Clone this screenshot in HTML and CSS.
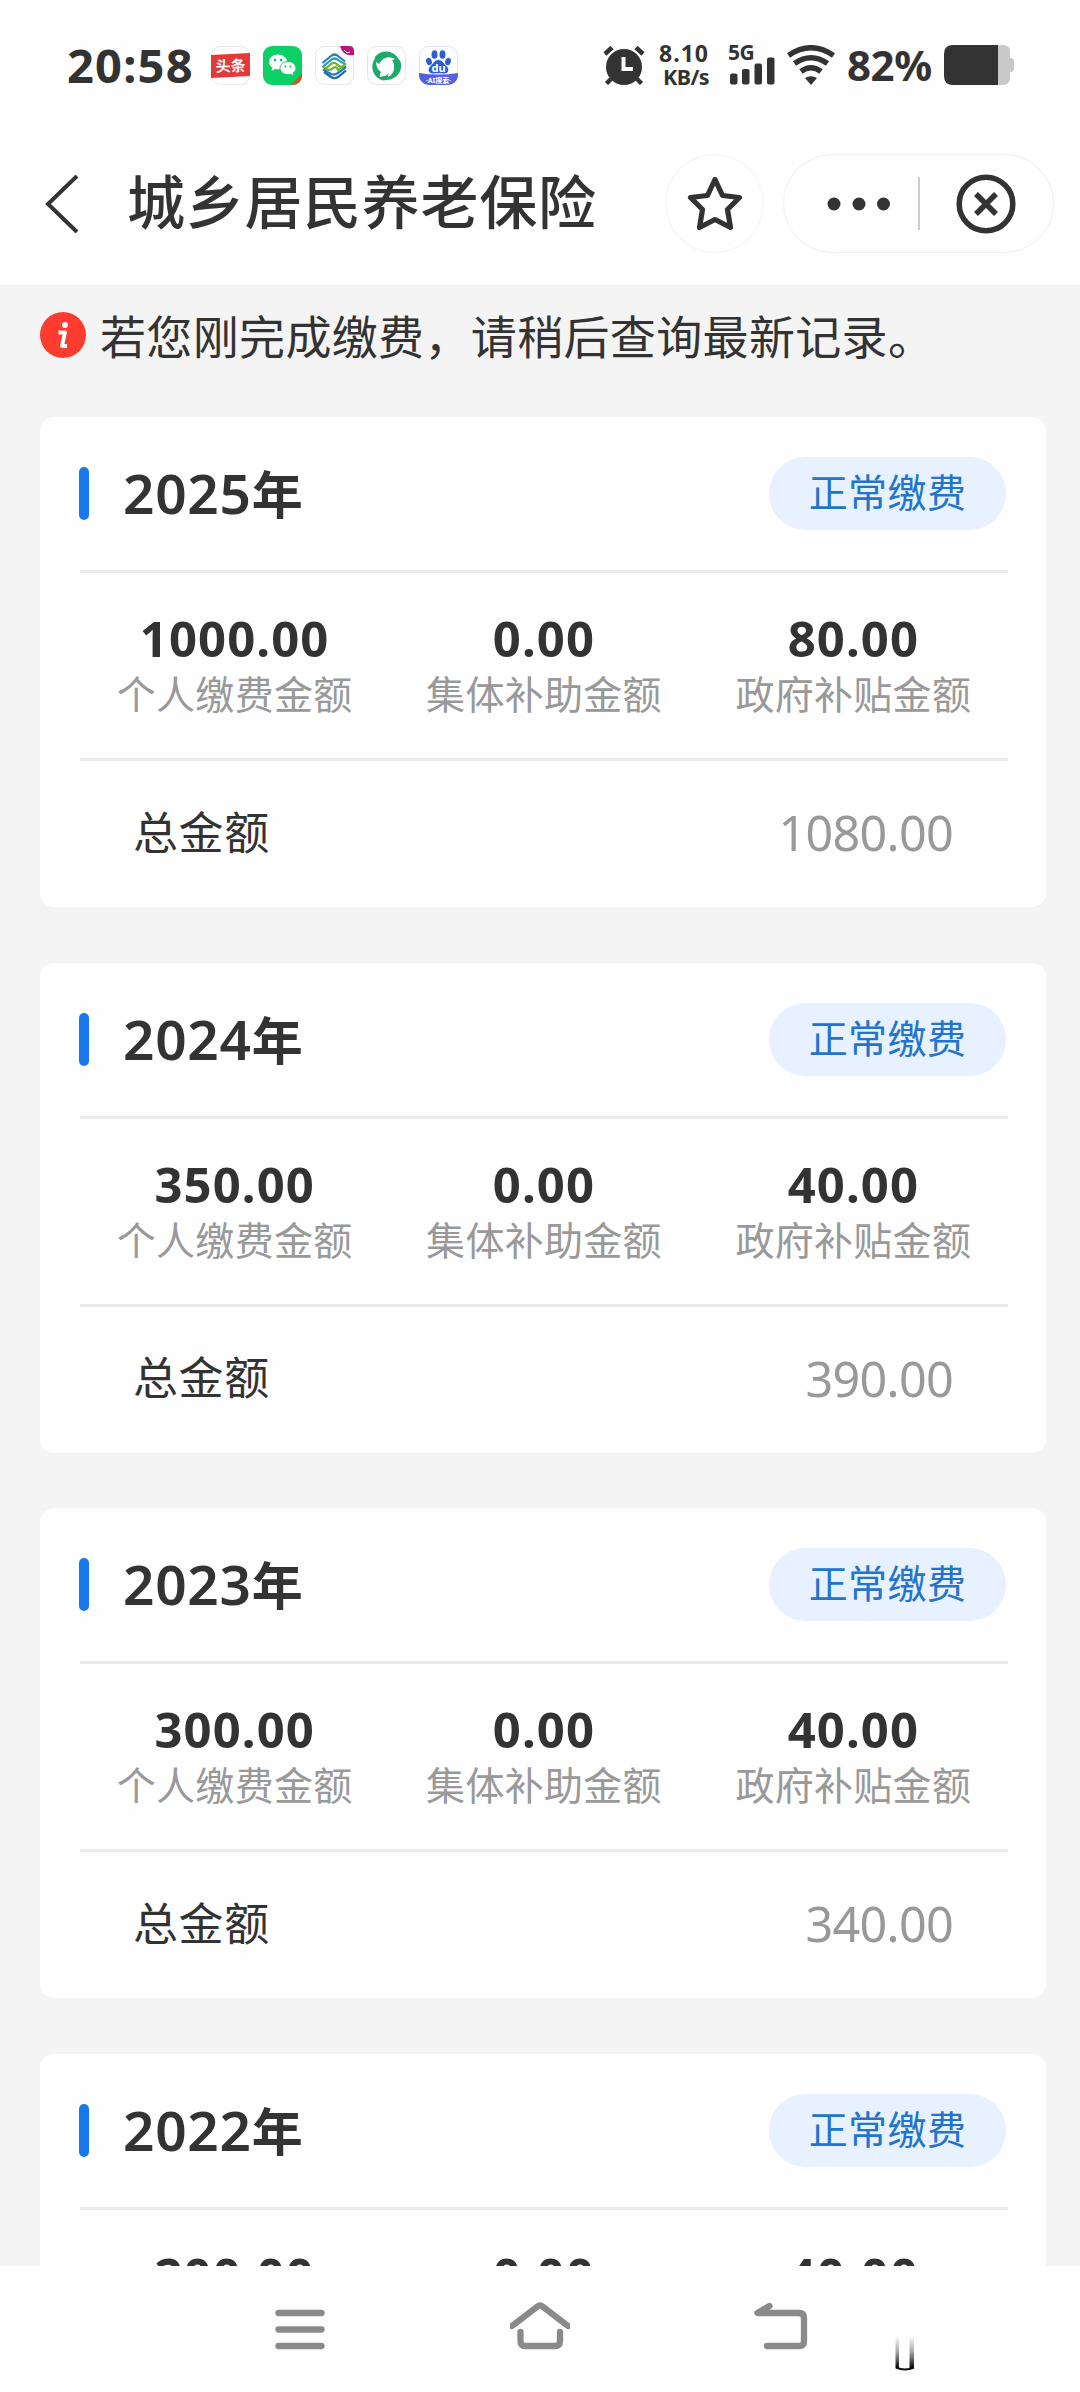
FILE: index.html
```html
<!DOCTYPE html>
<html lang="zh-CN">
<head>
<meta charset="utf-8">
<title>城乡居民养老保险</title>
<link rel="stylesheet" href="styles.css">
</head>
<body>
<div class="screen">
  <div class="status">
    <span class="clock">20:58</span>
    <div class="apps">
      <svg class="app" viewBox="0 0 39 39"><rect x=".5" y=".5" width="38" height="38" rx="9" fill="#fff" stroke="#e6e6e6"/><path d="M0 9 39 7V30L0 32Z" fill="#e23a38"/><text x="19.5" y="25.5" text-anchor="middle" font-size="15" font-weight="700" fill="#fff" transform="rotate(-2 19 20)">头条</text></svg>
      <svg class="app" viewBox="0 0 39 39"><clipPath id="wx"><rect width="39" height="39" rx="9"/></clipPath><g clip-path="url(#wx)"><rect width="39" height="39" fill="#0bd066"/><path d="M39 27V39H28Z" fill="#c75b2c"/></g><path d="M15 8.500C10 8.500 6 11.700 6 16c0 2.400 1.300 4.400 3.300 5.700L8.500 25l3.500-1.900c5 1 12-1.500 12-7.100 0-4.300-4-7.500-9-7.500Z" fill="#fff"/><path d="M25 15.500c-4.400 0-8 2.900-8 6.600s3.600 6.600 8 6.600c1 0 1.900-.1 2.800-.4l3 1.700-.7-2.800c1.800-1.200 2.900-3 2.900-5.100 0-3.700-3.600-6.600-8-6.600Z" fill="#fff" stroke="#0bd066"/><g fill="#0bb85b"><circle cx="12" cy="14" r="1.200"/><circle cx="18" cy="14" r="1.200"/><circle cx="22.500" cy="20.500" r="1"/><circle cx="27.500" cy="20.500" r="1"/></g></svg>
      <svg class="app" viewBox="0 0 39 39"><rect x=".5" y=".5" width="38" height="38" rx="9" fill="#fff" stroke="#e6e6e6"/><path d="M25 0h9q5 0 5 5v4q-11 2-14-9Z" fill="#c0127c"/><path d="M29 4l3 3 3-1" stroke="#fff" fill="none"/><g fill="none" stroke-width="2.200"><path d="M7.500 17 16 10Q19.500 7 23 10L30 15.500" stroke="#1d7fbd"/><path d="M7.500 21 16 14Q19.500 11 23 14T31 18" stroke="#2b9bb0"/><path d="M9 24 16 18Q19.500 15.500 22 18.500T31 20.500" stroke="#6fb52f"/><path d="M8 20.500Q14 26 17.500 22.500T23 24L31 17.500" stroke="#6fb52f"/><path d="M8 23.500 16 28Q19.500 29.500 23 27L31 21" stroke="#1d7fbd"/><path d="M9 26 16 31Q19.500 33.500 23 31L31 24.500" stroke="#2269aa"/></g></svg>
      <svg class="app" viewBox="0 0 39 39"><rect x=".5" y=".5" width="38" height="38" rx="9" fill="#fff" stroke="#e6e6e6"/><g fill="#1caa6b"><path id="leaf" d="M8 11C15 2 30 4 33.500 18C27 10 18 8 12 18Q7 15 8 11Z"/><use href="#leaf" transform="rotate(120 19.500 20)"/><use href="#leaf" transform="rotate(240 19.500 20)"/></g><circle cx="20" cy="19.500" r="7" fill="#fff"/><path d="M13 31c-1-5 3-7 9-5-1 4-5 4-9 5Z" fill="#fff"/></svg>
      <svg class="app" viewBox="0 0 39 39"><clipPath id="bd"><rect width="39" height="39" rx="10"/></clipPath><rect x=".5" y=".5" width="38" height="38" rx="9" fill="#fff" stroke="#dfe3f0"/><path clip-path="url(#bd)" d="M0 27q19.500 3 39 0V39H0Z" fill="#5560dc"/><g fill="#2c5fd6"><ellipse cx="15.500" cy="8.500" rx="3" ry="4.300"/><ellipse cx="23.500" cy="8.500" rx="3" ry="4.300"/><ellipse cx="10" cy="15.500" rx="2.800" ry="3.700" transform="rotate(-20 10 15.500)"/><ellipse cx="29" cy="15.500" rx="2.800" ry="3.700" transform="rotate(20 29 15.500)"/><path d="M19.500 14c4 0 5 3.500 8 6 4 4 1 8-3 7.500-3-.4-7-.4-10 0-4 .5-7-3.500-3-7.500 3-2.500 4-6 8-6Z"/></g><text x="19.500" y="26" text-anchor="middle" font-size="11" font-weight="700" fill="#fff">du</text><text x="19.500" y="37" text-anchor="middle" font-size="7" font-weight="700" fill="#fff">·AI搜索·</text></svg>
    </div>
    <div class="sys">
      <svg class="alarm" viewBox="0 0 42 40"><circle cx="21" cy="22" r="18" fill="#333"/><path d="M2 9 9 2.500M40 9 33 2.500M8 34 3.500 38.500M34 34l4.500 4.500" stroke="#333" stroke-width="4.500"/><path d="M20.500 12V24H30" stroke="#fff" stroke-width="4" fill="none"/></svg>
      <div class="speed"><span>8.10</span><span class="unit">KB/s</span></div>
      <div class="cell"><span class="gen">5G</span><svg class="bars" viewBox="0 0 48 40"><g fill="#333"><rect x="2" y="28.500" width="7.500" height="11" rx="2"/><rect x="14" y="24" width="7.500" height="15.500" rx="2"/><rect x="26.500" y="18.500" width="7.500" height="21" rx="2"/><rect x="39" y="12.500" width="7.500" height="27" rx="2"/></g></svg></div>
      <svg class="wifi" viewBox="0 0 48 40"><g fill="none" stroke="#333" stroke-width="5.500"><path d="M1.500 10.500Q24-5 46.500 10.500"/><path d="M7.500 18.500Q24 7 40.500 18.500"/><path d="M14 26.500Q24 19 34 26.500"/></g><path d="M18 33q6-3.500 12 0l-6 7Z" fill="#333"/></svg>
      <span class="percent">82%</span>
      <svg class="battery" viewBox="0 0 70 40"><path d="M54 0h5q7 0 7 7v6h1q3 0 3 3v7q0 4-3 4h-1v6q0 7-7 7h-5Z" fill="#c9c9c9"/><path d="M9 0H54V40H9Q0 40 0 31V9Q0 0 9 0Z" fill="#333"/></svg>
    </div>
  </div>

  <header class="header">
    <svg class="back" viewBox="0 0 34 58"><path d="M32 1 3 29 32 57" fill="none" stroke="#333" stroke-width="4"/></svg>
    <h1 class="title">城乡居民养老保险</h1>
    <div class="fav"><svg width="56" height="58" viewBox="0 0 56 58"><path d="M28 4.500 35.500 20.500 52.500 22.500 40.500 34.500 43.500 52.500 28 44.500 12.500 52.500 15.500 34.500 3.500 22.500 20.500 20.500Z" fill="none" stroke="#333" stroke-width="5.200" stroke-linejoin="round"/></svg></div>
    <div class="capsule">
      <svg class="dots" viewBox="0 0 64 14" fill="#333"><circle cx="7" cy="7" r="6.500"/><circle cx="32" cy="7" r="6.500"/><circle cx="56.500" cy="7" r="6.500"/></svg>
      <span class="split"></span>
      <svg class="close" viewBox="0 0 60 60" fill="none" stroke="#333" stroke-width="5.500"><circle cx="30" cy="30" r="26.800"/><path d="M20 20 40 40M40 20 20 40"/></svg>
    </div>
  </header>

  <main class="content">
    <p class="notice"><svg class="info" viewBox="0 0 46 46"><circle cx="23" cy="23" r="23" fill="#fd3c30"/><circle cx="25" cy="13" r="3" fill="#fff"/><path d="M18.500 20.500h6.500L22 34h5" fill="none" stroke="#fff" stroke-width="3.800" stroke-linejoin="round"/></svg><span class="notice-text">若您刚完成缴费，请稍后查询最新记录。</span></p>

    <section class="card">
      <div class="card-head"><i class="mark"></i><h2 class="year">2025<span>年</span></h2><span class="tag">正常缴费</span></div>
      <div class="stats">
        <div class="stat"><b>1000.00</b><span>个人缴费金额</span></div>
        <div class="stat"><b>0.00</b><span>集体补助金额</span></div>
        <div class="stat"><b>80.00</b><span>政府补贴金额</span></div>
      </div>
      <div class="total"><span class="total-label">总金额</span><span class="sum">1080.00</span></div>
    </section>

    <section class="card">
      <div class="card-head"><i class="mark"></i><h2 class="year">2024<span>年</span></h2><span class="tag">正常缴费</span></div>
      <div class="stats">
        <div class="stat"><b>350.00</b><span>个人缴费金额</span></div>
        <div class="stat"><b>0.00</b><span>集体补助金额</span></div>
        <div class="stat"><b>40.00</b><span>政府补贴金额</span></div>
      </div>
      <div class="total"><span class="total-label">总金额</span><span class="sum">390.00</span></div>
    </section>

    <section class="card">
      <div class="card-head"><i class="mark"></i><h2 class="year">2023<span>年</span></h2><span class="tag">正常缴费</span></div>
      <div class="stats">
        <div class="stat"><b>300.00</b><span>个人缴费金额</span></div>
        <div class="stat"><b>0.00</b><span>集体补助金额</span></div>
        <div class="stat"><b>40.00</b><span>政府补贴金额</span></div>
      </div>
      <div class="total"><span class="total-label">总金额</span><span class="sum">340.00</span></div>
    </section>

    <section class="card">
      <div class="card-head"><i class="mark"></i><h2 class="year">2022<span>年</span></h2><span class="tag">正常缴费</span></div>
      <div class="stats">
        <div class="stat"><b>200.00</b></div>
        <div class="stat"><b>0.00</b></div>
        <div class="stat"><b>40.00</b></div>
      </div>
    </section>
  </main>

  <nav class="navbar">
    <svg class="nav-icon" viewBox="0 0 60 60"><path d="M8.500 17H51.500M8.500 33.500H51.500M8.500 50H51.500"/></svg>
    <svg class="nav-icon" viewBox="0 0 60 60"><path d="M2 30 27.500 10.500Q30 8.500 32.500 10.500L58 30M10.500 36V45Q10.500 50 15.500 50H45Q50 50 50 45V36"/></svg>
    <svg class="nav-icon" viewBox="0 0 60 60"><path d="M19.500 10 7.500 17H49Q54 17 54 22V45Q54 50 49 50H17"/></svg>
    <svg class="smudge" viewBox="0 0 22 36"><defs><linearGradient id="fade" x1="0" y1="0" x2="0" y2="1"><stop offset="0" stop-color="#222" stop-opacity="0"/><stop offset=".5" stop-color="#222" stop-opacity=".4"/><stop offset="1" stop-color="#000"/></linearGradient></defs><path d="M1.500 0h3.500V32H1.500ZM15.500 0h4.500V32H15.500Z" fill="url(#fade)"/><path d="M2 31.500q9 4 18 0" fill="none" stroke="#111" stroke-width="2"/></svg>
  </nav>
</div>
</body>
</html>
```
FILE: styles.css
```css
* { box-sizing: border-box; }

body {
  margin: 0;
  background: #fefefe;
  color: #333;
  font-family: "Noto Sans", "Noto Sans CJK SC", sans-serif;
}

h1, h2, p { margin: 0; }

svg { display: block; flex: none; }

.screen {
  display: flex;
  flex-direction: column;
  width: 1080px;
  height: 2392px;
  overflow: hidden;
}

/* Status bar */
.status {
  display: flex;
  align-items: center;
  height: 122px;
  padding: 8px 66px 0 67px;
  flex: none;
  line-height: 1;
  font-weight: 700;
}

.clock { width: 144px; font-size: 47px; letter-spacing: 1.200px; white-space: nowrap; }

.apps { display: flex; gap: 13px; }

.app { width: 39px; height: 39px; overflow: hidden; }

.sys { display: flex; align-items: center; height: 40px; margin-left: auto; }

.alarm { width: 42px; height: 40px; }

.speed {
  display: flex;
  flex-direction: column;
  align-items: flex-end;
  width: 64px;
  font-size: 23px;
  line-height: 23px;
  letter-spacing: 1px;
}

.speed .unit { font-size: 21.500px; letter-spacing: -.6px; }

.cell { position: relative; width: 48px; height: 40px; margin-left: 19px; }

.gen { position: absolute; left: 0; top: -3px; font-size: 21px; letter-spacing: -.6px; }

.bars { width: 48px; height: 40px; }

.wifi { width: 48px; height: 40px; margin-left: 11px; }

.percent { flex: none; width: 109px; padding-left: 12px; font-size: 42px; letter-spacing: -.4px; white-space: nowrap; }

.battery { width: 70px; height: 40px; }

/* Page header */
.header {
  display: flex;
  align-items: center;
  height: 163px;
  padding: 0 26px 0 45px;
  flex: none;
}

.back { width: 34px; height: 58px; }

.title {
  margin-left: 48px;
  padding-bottom: 3px;
  font-size: 58px;
  font-weight: 500;
  line-height: 80px;
  letter-spacing: .7px;
}

.fav {
  display: flex;
  align-items: center;
  justify-content: center;
  width: 99px;
  height: 99px;
  margin-left: auto;
  border: 1.500px solid #f3f3f3;
  border-radius: 50%;
}

.capsule {
  display: flex;
  align-items: center;
  width: 271px;
  height: 99px;
  margin-left: 19px;
  padding-left: 43px;
  border: 1.500px solid #f1f1f1;
  border-radius: 50px;
}

.dots { width: 64px; height: 14px; }

.split { width: 1.500px; height: 53px; margin-left: 27px; background: #ccc; }

.close { width: 60px; height: 60px; margin-left: 36px; }

/* Payment records */
.content {
  flex: 1;
  min-height: 0;
  overflow: hidden;
  padding: 0 34px 0 40px;
  background: #f4f4f4;
}

.notice {
  display: flex;
  align-items: center;
  height: 132px;
  padding-bottom: 32px;
  font-size: 46px;
  letter-spacing: .35px;
  white-space: nowrap;
}

.notice-text { padding-bottom: 3px; }

.info { width: 46px; height: 46px; margin-right: 14px; }

.card {
  height: 490px;
  margin-bottom: 55.500px;
  padding: 0 38px 0 40px;
  border-radius: 14px;
  background: #fefefe;
}

.card-head {
  display: flex;
  align-items: center;
  height: 156px;
  border-bottom: 3px solid #ebebeb;
}

.mark { width: 10px; height: 53px; margin-left: -1px; border-radius: 5px; background: #1a78ee; }

.year {
  margin-left: 34px;
  font-size: 55px;
  font-weight: 600;
  line-height: 80px;
  letter-spacing: .7px;
}

.year span { font-size: 51px; }

.tag {
  width: 237px;
  height: 73px;
  margin-left: auto;
  margin-right: 2px;
  border-radius: 37px;
  background: #e7f1ff;
  color: #2374cc;
  font-size: 39px;
  line-height: 70px;
  letter-spacing: .4px;
  text-align: center;
}

.stats {
  display: grid;
  grid-template-columns: repeat(3, 1fr);
  height: 188px;
  padding-top: 39px;
  border-bottom: 3px solid #ebebeb;
}

.stat { display: flex; flex-direction: column; align-items: center; }

.stat b { font-size: 49px; line-height: 52px; letter-spacing: 1.100px; }

.stat span { font-size: 39px; line-height: 60px; letter-spacing: .3px; color: #999; }

.total {
  display: flex;
  align-items: center;
  justify-content: space-between;
  height: 146px;
  padding: 0 55px 4px 53px;
  font-size: 45px;
  letter-spacing: .6px;
}

.total-label { padding-bottom: 4px; }

.sum { font-size: 48.500px; letter-spacing: -.7px; color: #999; }

/* System navigation */
.navbar {
  position: relative;
  display: flex;
  justify-content: center;
  gap: 180px;
  height: 126px;
  padding-top: 30px;
  flex: none;
}

.nav-icon {
  width: 60px;
  height: 60px;
  fill: none;
  stroke: #8a8a8a;
  stroke-width: 6.300;
  stroke-linecap: round;
  stroke-linejoin: round;
}

.smudge { position: absolute; left: 894px; top: 70px; width: 22px; height: 36px; }
```
